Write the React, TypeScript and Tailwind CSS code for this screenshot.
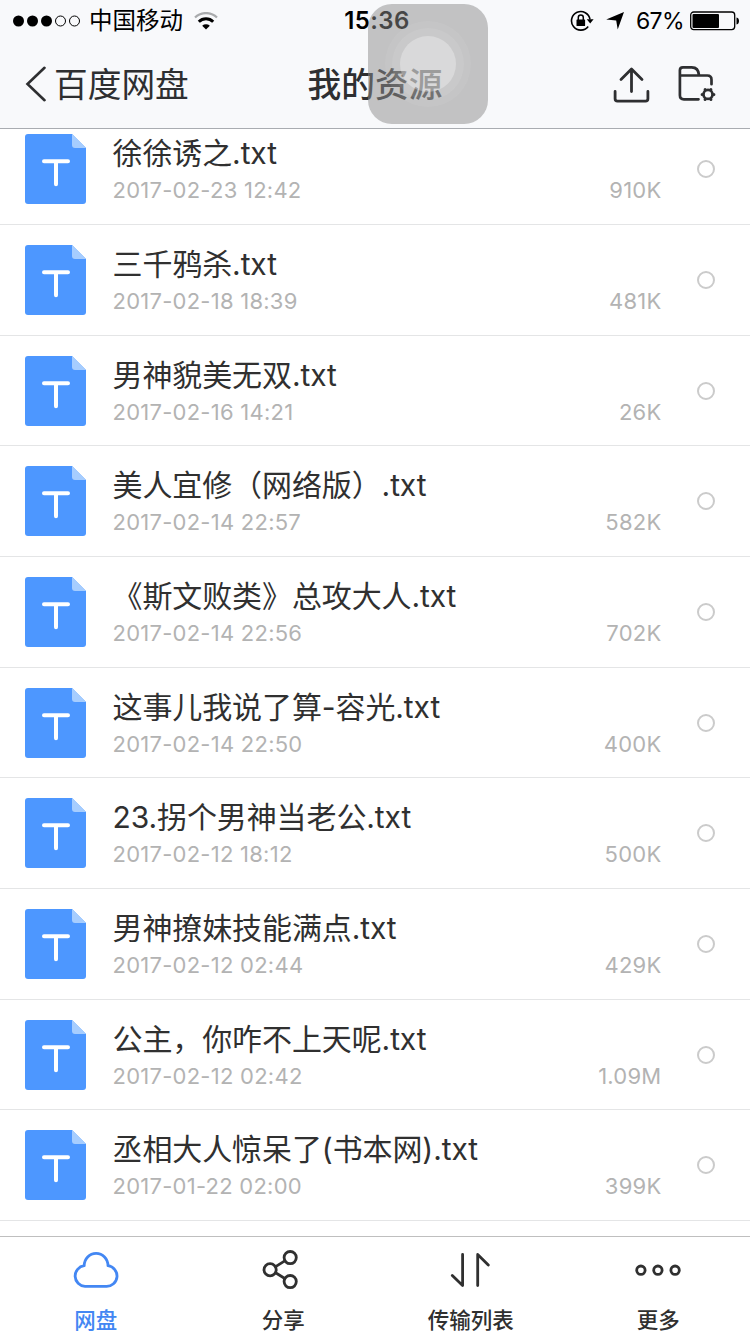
const files = [
  { name: "徐徐诱之.txt", date: "2017-02-23 12:42", size: "910K" },
  { name: "三千鸦杀.txt", date: "2017-02-18 18:39", size: "481K" },
  { name: "男神貌美无双.txt", date: "2017-02-16 14:21", size: "26K" },
  { name: "美人宜修（网络版）.txt", date: "2017-02-14 22:57", size: "582K" },
  { name: "《斯文败类》总攻大人.txt", date: "2017-02-14 22:56", size: "702K" },
  { name: "这事儿我说了算-容光.txt", date: "2017-02-14 22:50", size: "400K" },
  { name: "23.拐个男神当老公.txt", date: "2017-02-12 18:12", size: "500K" },
  { name: "男神撩妹技能满点.txt", date: "2017-02-12 02:44", size: "429K" },
  { name: "公主，你咋不上天呢.txt", date: "2017-02-12 02:42", size: "1.09M" },
  { name: "丞相大人惊呆了(书本网).txt", date: "2017-01-22 02:00", size: "399K" },
];

function StatusBar() {
  return (
    <div className="grid h-10 grid-cols-[1fr_auto_1fr] items-center pt-px pr-[10px] pl-[13px] text-black">
      <div className="flex items-center">
        <svg width="68" height="12" viewBox="0 0 68 12">
          <circle cx="5.5" cy="6" r="5.5" />
          <circle cx="19.5" cy="6" r="5.5" />
          <circle cx="33.5" cy="6" r="5.5" />
          <g fill="none" stroke="currentColor">
            <circle cx="47.5" cy="6" r="5" />
            <circle cx="61.5" cy="6" r="5" />
          </g>
        </svg>
        <span className="ml-2 text-[23.5px] leading-10">中国移动</span>
        <svg className="ml-[11px]" width="24" height="18" viewBox="0 0 24 18">
          <g fill="none" stroke="currentColor">
            <path d="M1 5.5a15.8 15.8 0 0 1 22 0" stroke="#a9abad" strokeWidth="2.2" />
            <path d="M4.8 9.8a10.3 10.3 0 0 1 14.4 0" strokeWidth="3" />
          </g>
          <path d="M12 17.6 8.2 13.7a5.6 5.6 0 0 1 7.6 0z" />
        </svg>
      </div>
      <span className="ml-px text-[24px] font-semibold tracking-[0.4px]">15:36</span>
      <div className="flex items-center justify-end">
        <svg width="24" height="22" viewBox="0 0 24 22">
          <path d="M18.2 16.5A9.3 9.3 0 1 1 20 9.4" fill="none" stroke="currentColor" strokeWidth="1.6" />
          <path d="M16.8 9.2h6.8l-3.4 4.2z" />
          <rect x="6.5" y="9.4" width="8.6" height="6.6" rx="0.6" />
          <path d="M8.3 10V7.4a2.5 2.5 0 0 1 5 0V10" fill="none" stroke="currentColor" strokeWidth="1.5" />
        </svg>
        <svg className="ml-3" width="18" height="18" viewBox="0 0 18 18">
          <path d="M18 0 11.7 17.6 10.2 8.6.2 7.4z" />
        </svg>
        <span className="ml-[12px] text-[23px] tracking-[-0.6px]">67%</span>
        <svg className="ml-[6px]" width="50" height="20" viewBox="0 0 50 20">
          <rect x="0.7" y="1" width="44" height="17.6" rx="3" fill="none" stroke="currentColor" strokeWidth="1.3" />
          <rect x="2.5" y="3" width="26.5" height="14" rx="1" />
          <path d="M46.5 6.5c2 .4 2.5 2 2.5 3.5s-.5 3.1-2.5 3.5z" />
        </svg>
      </div>
    </div>
  );
}

function NavBar() {
  return (
    <div className="grid h-[88px] grid-cols-[1fr_auto_1fr] items-center pt-[2px] pr-[33px] pl-[25px] text-[#2e2f31]">
      <div className="flex items-center">
        <svg className="-mt-[2px]" width="22" height="36" viewBox="0 0 22 36" fill="none">
          <path d="M19.5 1.8 2.5 18l17 16.2" stroke="currentColor" strokeWidth="2.6" strokeLinecap="round" />
        </svg>
        <span className="ml-[7px] text-[33.7px] leading-[86px]">百度网盘</span>
      </div>
      <span className="ml-[8px] text-[33.7px] leading-[86px] font-medium">我的资源</span>
      <div className="flex items-center justify-end">
        <svg
          width="38"
          height="36"
          viewBox="0 0 38 36"
          fill="none"
          stroke="currentColor"
          strokeWidth="2.8"
          strokeLinecap="round"
          strokeLinejoin="round"
        >
          <path d="M18.5 24.5V2.5M8 12.5 18.5 2 29 12.5M2.1 24.5v7.2c0 1.6.8 2.4 2.4 2.4h28c1.6 0 2.4-.8 2.4-2.4v-7.2" />
        </svg>
        <svg
          className="-mt-[3px] ml-[27px]"
          width="39"
          height="38"
          viewBox="0 0 39 38"
          fill="none"
          stroke="currentColor"
          strokeWidth="2.7"
          strokeLinecap="round"
          strokeLinejoin="round"
        >
          <path d="M20.5 34.3H5.9c-2.600 0-4-1.500-4-4.100V5.300c0-2 1-3 3-3h8.800c5 0 7 3 7.300 7.900M1.900 10.500h27.400c2.600 0 4.200 1.600 4.200 4.200v4.500" />
          <circle cx="30" cy="29.400" r="4.500" />
          <path
            d="M35.900 29.400h-.1M32.900 34.400v-.1M27.100 34.400v-.1M24.100 29.400h.1M27.100 24.400v.1M32.900 24.400v.1"
            strokeWidth="3"
          />
        </svg>
      </div>
    </div>
  );
}

// iOS AssistiveTouch button floating above the header
function AssistiveTouch() {
  return (
    <div className="absolute top-1 left-[368px] flex size-[120px] items-center justify-center rounded-[24px] bg-[#8c8c8c]/50">
      <div className="flex size-[86px] items-center justify-center rounded-full bg-white/6">
        <div className="flex size-[72px] items-center justify-center rounded-full bg-white/8">
          <div className="size-14 rounded-full bg-white/30" />
        </div>
      </div>
    </div>
  );
}

function FileIcon() {
  return (
    <svg className="shrink-0" width="61" height="70" viewBox="0 0 61 70">
      <path d="M3 0h44l14 14v53a3 3 0 0 1-3 3H3a3 3 0 0 1-3-3V3a3 3 0 0 1 3-3z" fill="#4d97ff" />
      <path d="M47 0l14 14H50a3 3 0 0 1-3-3z" fill="#a6cdff" />
      <path d="M19 27.3h24M31 27.3v23" stroke="#fff" strokeWidth="4" strokeLinecap="round" />
    </svg>
  );
}

function FileRow({ name, date, size }: { name: string; date: string; size: string }) {
  return (
    <li className="flex h-[110.67px] items-start border-b border-[#e4e5e6] pt-5 pr-[35px] pl-[25px]">
      <FileIcon />
      <div className="ml-[26.5px] flex-1">
        <p className="text-[30px] leading-[38px] tracking-[-0.1px] text-[#303030]">{name}</p>
        <div className="flex justify-between text-[22px] leading-[37px] tracking-[0.25px] text-[#b3b3b3]">
          <span>{date}</span>
          <span>{size}</span>
        </div>
      </div>
      <span className="mt-[26px] ml-[35.5px] size-[18px] rounded-full border-2 border-[#cbcbcb]" />
    </li>
  );
}

const tabs = [
  {
    label: "网盘",
    active: true,
    icon: (
      <path d="M14 37.400A10.400 10.400 0 0 1 13.200 16.700A11.900 12.400 0 0 1 37 16.700A10.400 10.400 0 0 1 35.200 37.400Z" />
    ),
  },
  {
    label: "分享",
    icon: (
      <>
        <circle cx="12.1" cy="20.7" r="6.1" />
        <circle cx="32.2" cy="8.6" r="6.1" />
        <circle cx="32.2" cy="32.6" r="6.1" />
        <path d="m17.600 17.600 9.200-5.700M17.600 23.800l9.200 5.700" />
      </>
    ),
  },
  {
    label: "传输列表",
    icon: <path d="M16.600 5.500v31L6.300 26.500M31.700 36.500v-31L42.300 16" />,
  },
  {
    label: "更多",
    icon: (
      <>
        <circle cx="7.9" cy="21.200" r="4.200" />
        <circle cx="24.9" cy="21.200" r="4.200" />
        <circle cx="42.100" cy="21.200" r="4.200" />
      </>
    ),
  },
];

function TabBar() {
  return (
    <nav className="grid h-[98px] grid-cols-4 border-t border-[#bfbfbf] bg-white">
      {tabs.map((tab) => (
        <div
          key={tab.label}
          className={
            tab.active
              ? "flex flex-col items-center pt-3 pl-1 text-[#4387f3]"
              : "flex flex-col items-center pt-3 pl-1 text-[#303030]"
          }
        >
          <svg
            width="50"
            height="42"
            viewBox="0 0 50 42"
            fill="none"
            stroke="currentColor"
            strokeWidth="2.8"
            strokeLinecap="round"
            strokeLinejoin="round"
            className="shrink-0"
          >
            {tab.icon}
          </svg>
          <span className="mt-3 text-[21.5px] leading-[34px] font-medium">{tab.label}</span>
        </div>
      ))}
    </nav>
  );
}

export default function App() {
  return (
    <div className="relative flex h-[1334px] w-[750px] flex-col overflow-hidden bg-white font-['Inter','Noto_Sans_CJK_SC',sans-serif]">
      <header className="shrink-0 border-b border-[#a9acb1] bg-[#f8f9fb]">
        <StatusBar />
        <NavBar />
      </header>
      <main className="min-h-0 flex-1 overflow-hidden">
        <ul className="-mt-[14.6px]">
          {files.map((file) => (
            <FileRow key={file.name} {...file} />
          ))}
        </ul>
      </main>
      <TabBar />
      <AssistiveTouch />
    </div>
  );
}
